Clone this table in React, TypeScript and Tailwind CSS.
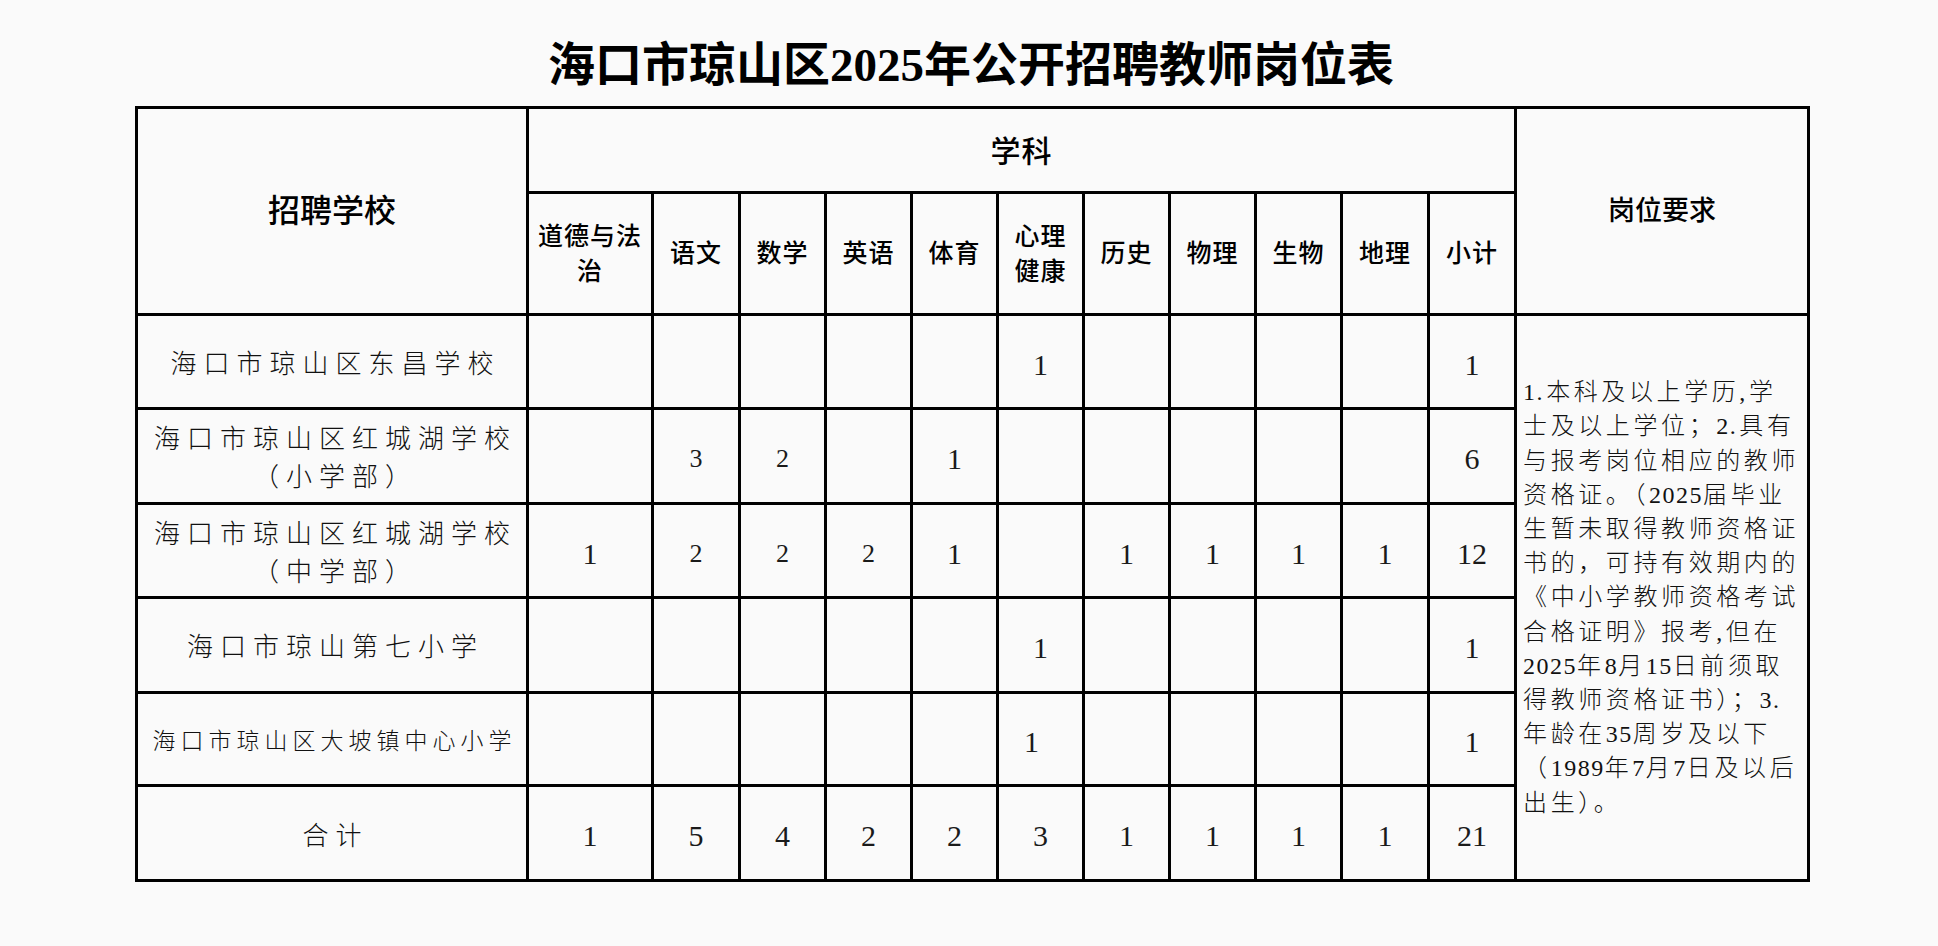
const subjects = ["道德与法\n治", "语文", "数学", "英语", "体育", "心理\n健康", "历史", "物理", "生物", "地理", "小计"];

const colWidths = [391, 125, 87, 86, 86, 86, 86, 86, 86, 86, 87, 87, 293];

type Row = {
  name: string[];
  tight?: boolean;
  values: (number | null)[];
  small?: number[];
  shift?: number[];
  h: string;
};

const rows: Row[] = [
  { name: ["海口市琼山区东昌学校"], values: [null, null, null, null, null, 1, null, null, null, null, 1], h: "h-[94px]" },
  {
    name: ["海口市琼山区红城湖学校", "（小学部）"],
    values: [null, 3, 2, null, 1, null, null, null, null, null, 6],
    small: [1, 2],
    h: "h-[95px]",
  },
  {
    name: ["海口市琼山区红城湖学校", "（中学部）"],
    values: [1, 2, 2, 2, 1, null, 1, 1, 1, 1, 12],
    small: [1, 2, 3],
    h: "h-[94px]",
  },
  { name: ["海口市琼山第七小学"], values: [null, null, null, null, null, 1, null, null, null, null, 1], h: "h-[95px]" },
  {
    name: ["海口市琼山区大坡镇中心小学"],
    tight: true,
    values: [null, null, null, null, null, 1, null, null, null, null, 1],
    shift: [5],
    h: "h-[93px]",
  },
];

const total = [1, 5, 4, 2, 2, 3, 1, 1, 1, 1, 21];

const requirement = [
  "1.本科及以上学历,学",
  "士及以上学位；2.具有",
  "与报考岗位相应的教师",
  "资格证。（2025届毕业",
  "生暂未取得教师资格证",
  "书的，可持有效期内的",
  "《中小学教师资格考试",
  "合格证明》报考,但在",
  "2025年8月15日前须取",
  "得教师资格证书）；3.",
  "年龄在35周岁及以下",
  "（1989年7月7日及以后",
  "出生）。",
];

// digits in the requirement text are narrower than the CJK glyphs
function ReqLine({ text }: { text: string }) {
  const parts = text.split(/(\d+)/);
  return (
    <div>
      {parts.map((p, i) =>
        /^\d+$/.test(p) ? (
          <span key={i} className="tracking-[1.5px]">
            {p}
          </span>
        ) : (
          <span key={i}>{p}</span>
        )
      )}
    </div>
  );
}

function NumCell({ v, small, shift }: { v: number | null; small?: boolean; shift?: boolean }) {
  return (
    <td className="border-[3px] border-black p-0 text-center align-middle">
      {v !== null && (
        <span
          className={
            (small ? "text-[26px] " : "text-[30px] ") +
            (shift ? "pr-[18px] " : "") +
            "inline-block pt-[6px] font-['Liberation_Serif','Noto_Sans_CJK_SC',serif] text-[#1a1a1a] leading-none"
          }
        >
          {v}
        </span>
      )}
    </td>
  );
}

export default function App() {
  return (
    <div className="min-h-[946px] w-full bg-[#fafafa]">
      <div className="ml-[135px] w-[1672px] pt-[35px]">
        <h1 className="mb-[11px] h-[60px] text-center text-[47px] font-bold leading-[60px] text-black font-['Liberation_Serif','Noto_Sans_CJK_SC',serif]">
          海口市琼山区2025年公开招聘教师岗位表
        </h1>

        <table className="w-[1672px] table-fixed border-collapse border-[3px] border-black">
          <colgroup>
            {colWidths.map((w, i) => (
              <col key={i} style={{ width: w }} />
            ))}
          </colgroup>
          <thead className="font-['Liberation_Sans','Noto_Sans_CJK_SC',sans-serif] text-black">
            <tr className="h-[85px]">
              <th rowSpan={2} className="border-[3px] border-black p-0 text-[32px] font-medium">
                招聘学校
              </th>
              <th colSpan={11} className="border-[3px] border-black p-0 pt-[2px] text-[30px] font-medium tracking-[1px]">
                学科
              </th>
              <th rowSpan={2} className="border-[3px] border-black p-0 text-[27px] font-medium">
                岗位要求
              </th>
            </tr>
            <tr className="h-[122px]">
              {subjects.map((s) => (
                <th
                  key={s}
                  className="whitespace-pre-line border-[3px] border-black px-[6px] py-0 text-[25px] font-medium leading-[35px] tracking-[1px]"
                >
                  {s}
                </th>
              ))}
            </tr>
          </thead>
          <tbody className="font-['Noto_Sans_CJK_SC',sans-serif] font-light text-[#111]">
            {rows.map((r, ri) => (
              <tr key={ri} className={r.h}>
                <td
                  className={
                    (r.tight ? "text-[23px] tracking-[5px] pl-[5px] " : "text-[26px] tracking-[7px] pl-[7px] ") +
                    "border-[3px] border-black py-0 pr-0 text-center leading-[38px]"
                  }
                >
                  {r.name.map((line) => (
                    <div key={line}>{line}</div>
                  ))}
                </td>
                {r.values.map((v, i) => (
                  <NumCell key={i} v={v} small={r.small?.includes(i)} shift={r.shift?.includes(i)} />
                ))}
                {ri === 0 && (
                  <td rowSpan={6} className="border-[3px] border-black py-0 pl-[6px] pr-0 align-middle">
                    <div className="text-[24px] leading-[34.2px] tracking-[3.6px] text-[#111] font-['Liberation_Serif','Noto_Sans_CJK_SC',serif] font-light whitespace-nowrap">
                      {requirement.map((line) => (
                        <ReqLine key={line} text={line} />
                      ))}
                    </div>
                  </td>
                )}
              </tr>
            ))}
            <tr className="h-[95px]">
              <td className="border-[3px] border-black p-0 pl-[7px] text-center text-[26px] tracking-[7px]">合计</td>
              {total.map((v, i) => (
                <NumCell key={i} v={v} />
              ))}
            </tr>
          </tbody>
        </table>
      </div>
    </div>
  );
}
